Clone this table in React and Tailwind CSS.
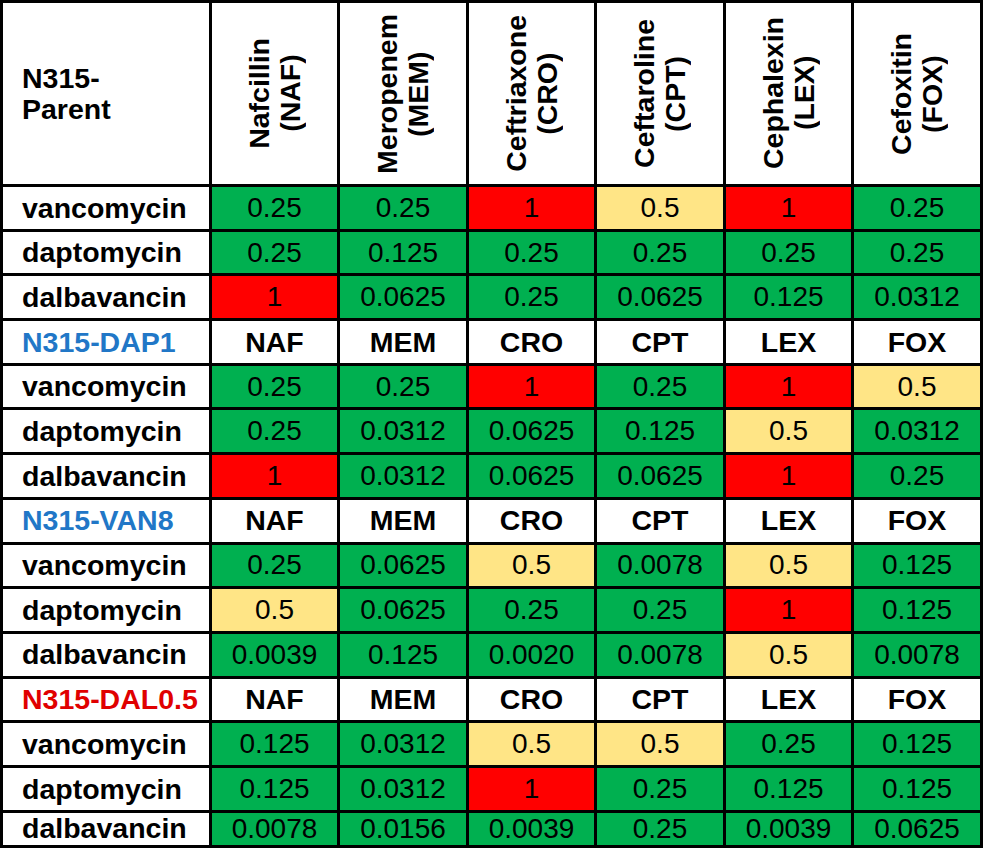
import React from "react";

const drugs = [
  ["Nafcillin", "NAF"],
  ["Meropenem", "MEM"],
  ["Ceftriaxone", "CRO"],
  ["Ceftaroline", "CPT"],
  ["Cephalexin", "LEX"],
  ["Cefoxitin", "FOX"],
];

// g = green, r = red, y = yellow
const sections = [
  {
    name: null,
    rows: [
      ["vancomycin", [["0.25", "g"], ["0.25", "g"], ["1", "r"], ["0.5", "y"], ["1", "r"], ["0.25", "g"]]],
      ["daptomycin", [["0.25", "g"], ["0.125", "g"], ["0.25", "g"], ["0.25", "g"], ["0.25", "g"], ["0.25", "g"]]],
      ["dalbavancin", [["1", "r"], ["0.0625", "g"], ["0.25", "g"], ["0.0625", "g"], ["0.125", "g"], ["0.0312", "g"]]],
    ],
  },
  {
    name: "N315-DAP1",
    color: "text-[#2177c7]",
    rows: [
      ["vancomycin", [["0.25", "g"], ["0.25", "g"], ["1", "r"], ["0.25", "g"], ["1", "r"], ["0.5", "y"]]],
      ["daptomycin", [["0.25", "g"], ["0.0312", "g"], ["0.0625", "g"], ["0.125", "g"], ["0.5", "y"], ["0.0312", "g"]]],
      ["dalbavancin", [["1", "r"], ["0.0312", "g"], ["0.0625", "g"], ["0.0625", "g"], ["1", "r"], ["0.25", "g"]]],
    ],
  },
  {
    name: "N315-VAN8",
    color: "text-[#2177c7]",
    rows: [
      ["vancomycin", [["0.25", "g"], ["0.0625", "g"], ["0.5", "y"], ["0.0078", "g"], ["0.5", "y"], ["0.125", "g"]]],
      ["daptomycin", [["0.5", "y"], ["0.0625", "g"], ["0.25", "g"], ["0.25", "g"], ["1", "r"], ["0.125", "g"]]],
      ["dalbavancin", [["0.0039", "g"], ["0.125", "g"], ["0.0020", "g"], ["0.0078", "g"], ["0.5", "y"], ["0.0078", "g"]]],
    ],
  },
  {
    name: "N315-DAL0.5",
    color: "text-[#e00000]",
    rows: [
      ["vancomycin", [["0.125", "g"], ["0.0312", "g"], ["0.5", "y"], ["0.5", "y"], ["0.25", "g"], ["0.125", "g"]]],
      ["daptomycin", [["0.125", "g"], ["0.0312", "g"], ["1", "r"], ["0.25", "g"], ["0.125", "g"], ["0.125", "g"]]],
      ["dalbavancin", [["0.0078", "g"], ["0.0156", "g"], ["0.0039", "g"], ["0.25", "g"], ["0.0039", "g"], ["0.0625", "g"]]],
    ],
  },
];

const bg = {
  g: "bg-[#00b050]",
  r: "bg-[#ff0000]",
  y: "bg-[#ffe586]",
};

const cell = "border-[3px] border-black";

const App = () => {
  const flat = [];
  sections.forEach((s) => {
    if (s.name) flat.push({ type: "head", name: s.name, color: s.color });
    s.rows.forEach((r) => flat.push({ type: "data", label: r[0], values: r[1] }));
  });

  return (
    <div className="bg-white w-[983px] h-[850px] font-['Liberation_Sans',Arial,sans-serif] text-black">
      <table className="table-fixed border-collapse w-[983px]">
        <colgroup>
          <col className="w-[209px]" />
          <col className="w-[128px]" />
          <col className="w-[129px]" />
          <col className="w-[128px]" />
          <col className="w-[129px]" />
          <col className="w-[128px]" />
          <col className="w-[129px]" />
        </colgroup>
        <thead>
          <tr>
            <th className={`${cell} h-[184px] pl-[19px] text-left font-bold text-[28.5px] leading-[31px]`}>
              N315-
              <br />
              Parent
            </th>
            {drugs.map(([name, abbr]) => (
              <th key={abbr} className={`${cell} h-[184px] p-0`}>
                <div className="flex justify-center items-center">
                  <div className="[writing-mode:vertical-rl] rotate-180 text-center font-bold text-[28.5px] leading-[31px]">
                    {name}
                    <br />({abbr})
                  </div>
                </div>
              </th>
            ))}
          </tr>
        </thead>
        <tbody>
          {flat.map((row, i) => {
            const last = i === flat.length - 1;
            const h = last ? "h-[35px]" : "h-[44.7px]";
            if (row.type === "head") {
              return (
                <tr key={i}>
                  <td className={`${cell} ${h} pl-[19px] font-bold text-[28.5px] leading-none ${row.color}`}>
                    {row.name}
                  </td>
                  {drugs.map(([, abbr]) => (
                    <td key={abbr} className={`${cell} ${h} p-0 text-center font-bold text-[28.5px] leading-none`}>
                      {abbr}
                    </td>
                  ))}
                </tr>
              );
            }
            return (
              <tr key={i}>
                <td className={`${cell} ${h} pl-[19px] font-bold text-[28.5px] leading-none`}>{row.label}</td>
                {row.values.map(([v, c], j) => (
                  <td key={j} className={`${cell} ${h} p-0 text-center text-[28px] leading-none ${bg[c]}`}>
                    {v}
                  </td>
                ))}
              </tr>
            );
          })}
        </tbody>
      </table>
    </div>
  );
};

export default App;
